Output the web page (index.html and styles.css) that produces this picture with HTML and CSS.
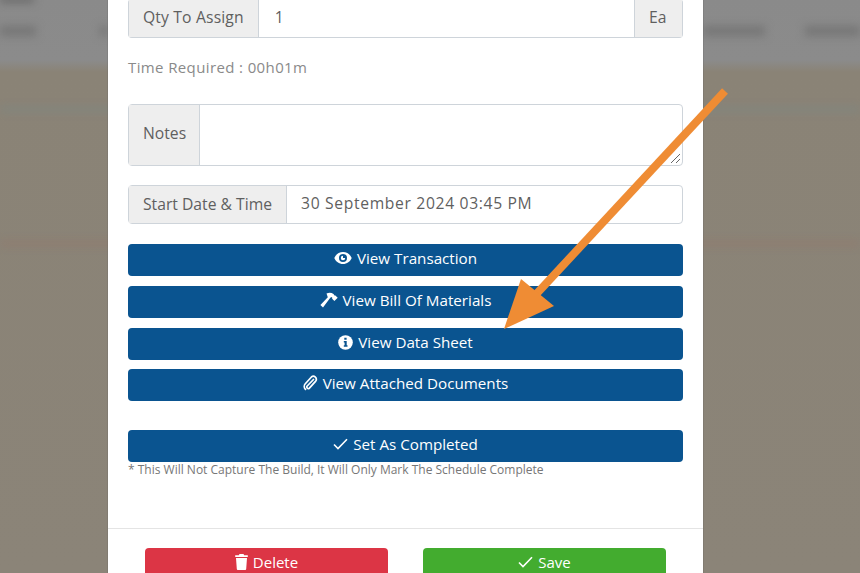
FILE: index.html
```html
<!DOCTYPE html>
<html lang="en">
<head>
<meta charset="utf-8">
<title>Assign Schedule</title>
<link rel="stylesheet" href="styles.css">
</head>
<body>
<div class="backdrop">
  <div class="blur-logo"></div>
  <div class="blur-tabs">
    <span class="blur-tab t1"></span>
    <span class="blur-tab t2"></span>
    <span class="blur-tab t3"></span>
    <span class="blur-tab t4"></span>
  </div>
  <div class="blur-line line-blue"></div>
  <div class="blur-line line-red"></div>
</div>
<main class="modal">
  <div class="modal-body">
    <div class="input-group qty">
      <span class="addon">Qty To Assign</span>
      <span class="field">1</span>
      <span class="addon addon-end">Ea</span>
    </div>
    <p class="time">Time Required : 00h01m</p>
    <div class="input-group notes">
      <span class="addon">Notes</span>
      <span class="field">
        <svg class="grip" width="11" height="11" viewBox="0 0 11 11"><path d="M1 10 10 1M6 10 10 6" stroke="#666" stroke-width="1" fill="none"/></svg>
      </span>
    </div>
    <div class="input-group start">
      <span class="addon">Start Date &amp; Time</span>
      <span class="field">30 September 2024 03:45 PM</span>
    </div>
    <div class="actions">
      <button class="btn blue">
        <svg class="ico" width="18" height="14" viewBox="0 0 18 14"><path fill="#fff" fill-rule="evenodd" d="M9 1C5 1 1.800 3.500.3 7c1.500 3.500 4.700 6 8.700 6s7.200-2.500 8.700-6C16.200 3.500 13 1 9 1Zm0 10a4 4 0 1 1 0-8 4 4 0 0 1 0 8Zm0-6.200a2.200 2.200 0 1 0 2.200 2.200H9Z"/></svg>
        View Transaction</button>
      <button class="btn blue">
        <svg class="ico" width="18" height="16" viewBox="0 0 18 16"><path fill="#fff" d="M6.500 1.500C9 .3 11.500.5 13.500 2l1 1.500.9-.1 2.300 2.400-3.300 3.300-2.300-2.300.2-1-1-.8-1 .8L3 15.500.4 13 7.800 5.200Z"/></svg>
        View Bill Of Materials</button>
      <button class="btn blue">
        <svg class="ico" width="15" height="15" viewBox="0 0 15 15"><circle cx="7.500" cy="7.500" r="7.300" fill="#fff"/><path fill="#0b548f" d="M6.300 2.800h2.300v2H6.300zM5.800 6h2.900v4.300h.8v1.500H5.800v-1.500h.8V7.500h-.8z"/></svg>
        View Data Sheet</button>
      <button class="btn blue tight">
        <svg class="ico" width="15" height="16" viewBox="0 0 15 16"><path fill="none" stroke="#fff" stroke-width="1.700" stroke-linecap="round" d="M10.500 4.500 4.200 11a1.500 1.500 0 0 0 2.200 2.100l6.300-7a3 3 0 0 0-4.300-4.100L2.300 8.800a4 4 0 0 0 .2 5.600"/></svg>
        View Attached Documents</button>
    </div>
    <button class="btn blue complete">
      <svg class="ico" width="15" height="12" viewBox="0 0 15 12"><path fill="none" stroke="#fff" stroke-width="1.600" d="M1 6.500 5 10.500 14 1.200"/></svg>
      Set As Completed</button>
    <p class="hint">* This Will Not Capture The Build, It Will Only Mark The Schedule Complete</p>
  </div>
  <div class="modal-footer">
    <button class="btn red">
      <svg class="ico" width="13" height="16" viewBox="0 0 13 16"><path fill="#fff" d="M4.500 0h4l.7 1.200h3.600v1.800H.2V1.200h3.600ZM1 4h11l-.8 11a1 1 0 0 1-1 1H2.800a1 1 0 0 1-1-1Z"/></svg>
      Delete</button>
    <button class="btn green">
      <svg class="ico" width="15" height="12" viewBox="0 0 15 12"><path fill="none" stroke="#fff" stroke-width="1.600" d="M1 6.500 5 10.500 14 1.200"/></svg>
      Save</button>
  </div>
</main>
<svg class="arrow" width="860" height="573" viewBox="0 0 860 573">
  <path d="M725 91 528 303" stroke="#ef8c34" stroke-width="8" fill="none"/>
  <path fill="#ef8c34" d="M504 329 521 279 554 306Z"/>
</svg>
</body>
</html>
```
FILE: styles.css
```css
* { box-sizing: border-box; }
html, body { margin: 0; height: 573px; overflow: hidden; }
body {
  position: relative;
  font-family: "Open Sans", sans-serif;
  color: #5f5f5f;
  background: linear-gradient(#8a8a8a 0, #8b8b8b 60px, #8a8376 72px, #8b8478 100%);
}
.backdrop { position: absolute; inset: 0; filter: blur(4px); }
.blur-logo { position: absolute; left: 0; top: -3px; width: 34px; height: 5px; background: #606060; }
.blur-tab { position: absolute; top: 26px; height: 10px; background: #767676; }
.t1 { left: 0; width: 36px; }
.t2 { left: 100px; width: 8px; }
.t3 { left: 703px; width: 62px; }
.t4 { left: 805px; width: 55px; }
.blur-line { position: absolute; left: 0; right: 0; height: 3px; }
.line-blue { top: 108px; background: #7a8885; }
.line-red { top: 242px; background: #94776a; }
.modal {
  position: absolute;
  left: 108px;
  top: -1px;
  width: 595px;
  height: 600px;
  background: #fff;
  display: flex;
  flex-direction: column;
  box-shadow: 0 0 1px #555;
}
.modal-body { padding: 0 20px; height: 530px; border-bottom: 1px solid #e4e4e4; }
.input-group { display: flex; border: 1px solid #ced4da; border-radius: 4px; font-size: 15.7px; color: #5f5f5f; }
.qty { height: 39px; border-top: 0; }
.addon {
  display: flex; align-items: center; padding: 0 14px 2px;
  background: #eeeeee; border-right: 1px solid #ced4da; white-space: nowrap;
}
.qty .addon { letter-spacing: .15px; }
.notes .addon { padding-right: 13px; }
.addon-end { border-right: 0; border-left: 1px solid #ced4da; width: 48px; }
.field { flex: 1; display: flex; align-items: center; padding: 0 14px 3px; position: relative; letter-spacing: .65px; }
.qty .field { padding-left: 16px; }
.time { margin: 19px 0 0; height: 20px; line-height: 20px; font-size: 15px; letter-spacing: .38px; color: #8a8a8a; }
.notes { height: 62px; margin-top: 27px; }
.notes .addon { align-items: flex-start; padding-top: 17px; }
.grip { position: absolute; right: 1px; bottom: 1px; }
.start { height: 39px; margin-top: 19px; }
.actions { display: flex; flex-direction: column; gap: 10px; margin-top: 20px; }
.tight { margin-top: -1px; }
.btn {
  display: flex; align-items: center; justify-content: center; gap: 5px;
  height: 32px; width: 100%; border: 0; border-radius: 4px; padding: 0 0 5px;
  font: 15.2px "Open Sans", sans-serif; color: #fff;
}
.ico { margin-top: 1px; }
.blue { background: #0a5490; }
.complete { margin-top: 29px; }
.hint { margin: 0; height: 15px; line-height: 15px; font-size: 12px; color: #777; }
.modal-footer { display: flex; justify-content: space-between; padding: 19px 37px 0; }
.modal-footer .btn { width: 243px; height: 40px; padding-bottom: 13px; font-size: 15px; }
.red { background: #dc3545; }
.green { background: #43ac2f; }
.arrow { position: absolute; left: 0; top: 0; pointer-events: none; }
```
